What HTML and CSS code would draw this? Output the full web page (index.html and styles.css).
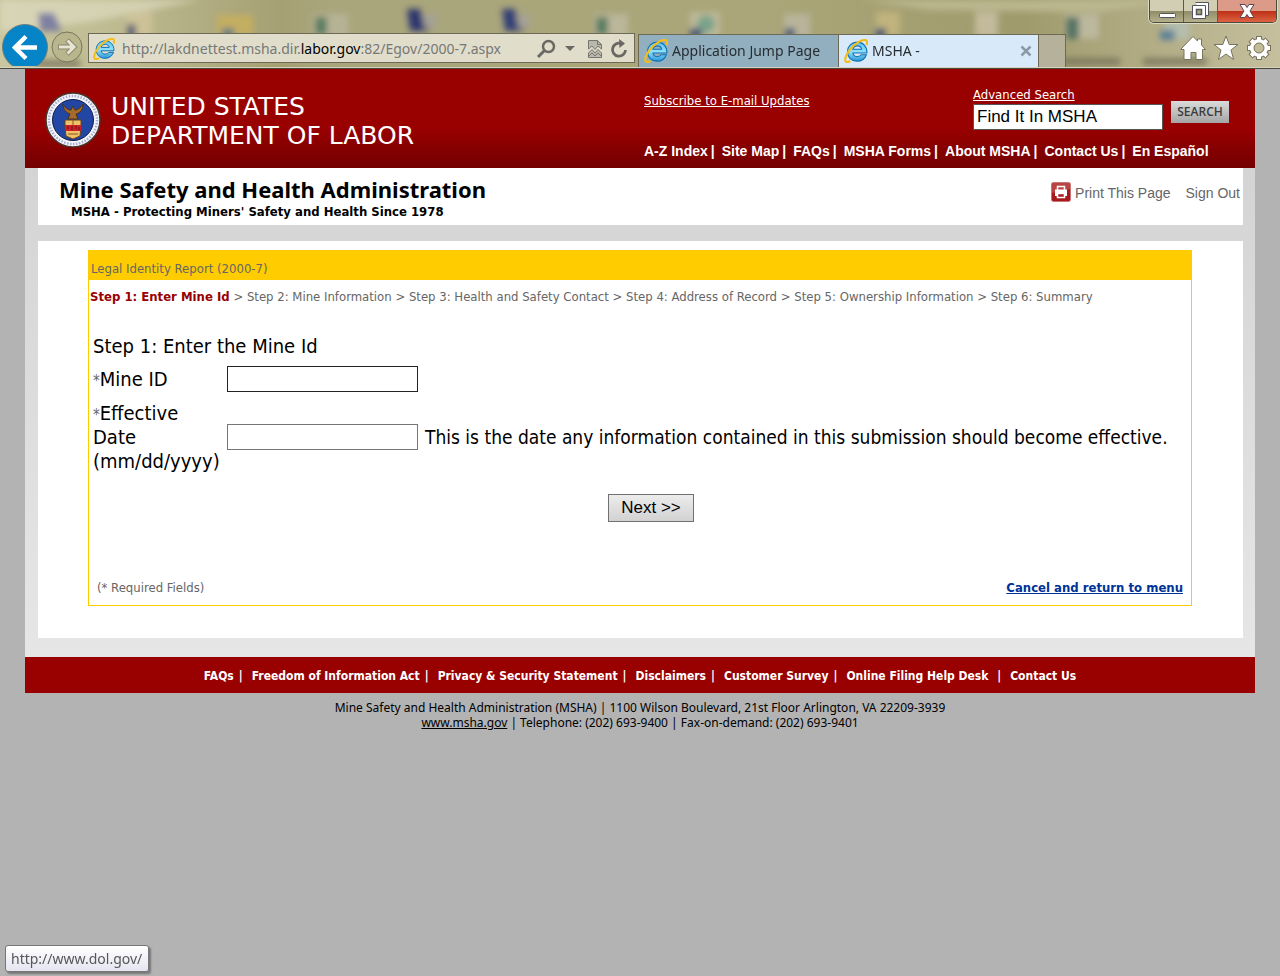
FILE: index.html
```html
<!DOCTYPE html>
<html lang="en">
<head>
<meta charset="utf-8">
<title>MSHA -</title>
<link rel="stylesheet" href="styles.css">
</head>
<body>
<svg class="defs" width="0" height="0" aria-hidden="true">
  <defs>
    <linearGradient id="ieBlue" x1="0" y1="0" x2="0" y2="1">
      <stop offset="0" stop-color="#5cc4ee"/><stop offset=".5" stop-color="#8fe0fa"/><stop offset="1" stop-color="#2a97d6"/>
    </linearGradient>
    <symbol id="ie" viewBox="0 0 22 22">
      <path d="M21 12.800H8.200c.3 2.200 1.800 3.300 4 3.300 1.600 0 2.700-.6 3.500-1.700h4.800c-1.200 3.600-4.200 5.900-8.500 5.900-5.300 0-8.800-3.500-8.800-8.600 0-5.200 3.700-8.800 8.900-8.800 5.500 0 9 3.900 8.900 9.900zM8.200 9.400h8c-.3-2-1.800-3.100-3.900-3.100S8.600 7.400 8.200 9.400z" fill="url(#ieBlue)" stroke="#1272b4" stroke-width="1"/>
      <path d="M20.700 5.600c.7-2.200.5-3.900-.5-4.500C17.500-.3 10.200 3.600 5.200 10 1.600 14.600.1 19.500 1.900 20.800c1 .6 2.400.3 4-.7" fill="none" stroke="#f5bd19" stroke-width="2"/>
    </symbol>
  </defs>
</svg>

<header class="browser">
  <svg class="desktop" viewBox="0 0 1280 68" preserveAspectRatio="none" aria-hidden="true">
    <defs>
      <linearGradient id="glass" x1="0" y1="0" x2="1" y2="0">
        <stop offset="0" stop-color="#c9c6a0"/><stop offset=".1" stop-color="#bdb98f"/><stop offset=".22" stop-color="#a5a074"/><stop offset=".26" stop-color="#aaa67c"/><stop offset=".6" stop-color="#aaa679"/><stop offset=".8" stop-color="#a09b6d"/><stop offset="1" stop-color="#c5bf9e"/>
      </linearGradient>
      <filter id="soft" x="-5%" y="-50%" width="110%" height="200%"><feGaussianBlur stdDeviation="3"/></filter>
    </defs>
    <rect width="1280" height="68" fill="url(#glass)"/>
    <g filter="url(#soft)">
      <path d="M0 0h200L90 22 0 32z" fill="#dedcc0" opacity=".7"/>
      <path d="M860 0h330l-90 12-170-2z" fill="#bbb78f"/>
      <g opacity=".85">
        <path d="M38 13h16l8 18H40z" fill="#6f73a0"/>
        <path d="M126 12h26v24h-26z" fill="#d0c39b"/><path d="M127 24h9v16h-9z" fill="#4c5575"/>
        <path d="M217 15h36v20h-36z" fill="#c8b05c"/><path d="M222 28h12v10h-12z" fill="#557884"/>
        <path d="M312 14h36v24h-36z" fill="#b9b69b"/><path d="M315 17h12v18h-12z" fill="#4b765f"/>
        <path d="M407 9h13l10 22h-20z" fill="#18246e"/><path d="M422 14h15v14h-12z" fill="#a4a29a"/>
        <path d="M502 9h13l10 22h-20z" fill="#222d76"/><path d="M516 14h14v14h-11z" fill="#a4a29a"/>
        <path d="M594 14h34v24h-34z" fill="#bebaa0"/><path d="M596 17h12v18h-12z" fill="#4b765f"/>
        <path d="M690 12h30v26h-30z" fill="#c2bda0"/><circle cx="706" cy="24" r="9" fill="#72a48d"/><path d="M690 28h12v10h-12z" fill="#334c78"/>
        <path d="M784 14h26v24h-26z" fill="#bdb7a1"/><path d="M785 28h10v10h-10z" fill="#334c78"/>
        <path d="M876 12h24v24h-24z" fill="#c6b77f"/><path d="M876 28h10v10h-10z" fill="#334c78"/>
        <path d="M975 12h23v25h-23z" fill="#c8c0a3"/>
        <path d="M1065 14h34v25h-34z" fill="#c0bda4"/><path d="M1066 17h13v22h-13z" fill="#456c62"/>
        <path d="M1165 15h24v24h-24z" fill="#b6c1b4"/><path d="M1160 30h15v10h-15z" fill="#4a789a"/>
        <path d="M1045 58h75v7h-75zM1143 58h64v7h-64zM36 60h44v7H36z" fill="#77745a"/>
      </g>
    </g>
  </svg>

  <div class="window-buttons">
    <button class="win" aria-label="Minimize"><svg width="20" height="20" viewBox="0 0 20 20"><rect x="2.500" y="12.500" width="16" height="4" rx="1" fill="#fff" stroke="#535460"/></svg></button>
    <button class="win" aria-label="Restore"><svg width="20" height="20" viewBox="0 0 20 20"><path d="M4.500 1.500h13v13h-4" fill="#fff" stroke="#535460"/><path d="M1.500 4.500h13v13h-13z" fill="#fff" stroke="#535460"/><path d="M5.500 8.500h5v5h-5z" fill="#aaa67c" stroke="#535460" stroke-width="1.500"/></svg></button>
    <button class="win win-close" aria-label="Close"><svg width="18" height="16" viewBox="0 0 18 16"><path d="M2 1.500h5l2 3 2-3h5l-4 6.500 4 6.500h-5l-2-3-2 3H2L6 8z" fill="#fff" stroke="#5b4650"/></svg></button>
  </div>

  <div class="toolbar">
    <button class="back" aria-label="Back"><svg width="46" height="46" viewBox="0 0 46 46"><circle cx="23" cy="23" r="22.500" fill="#0584c7" stroke="#6b7f7c"/><path d="M35 23.500H13M24 12.500l-11 11 11 11" fill="none" stroke="#fff" stroke-width="4.500"/></svg></button>
    <button class="forward" aria-label="Forward"><svg width="32" height="32" viewBox="0 0 32 32"><circle cx="16" cy="16" r="15" fill="#b9b58d" stroke="#77745c" stroke-width="1"/><path d="M7 16h15M16 9l7 7-7 7" fill="none" stroke="#8a876c" stroke-width="5"/><path d="M8 16h14M16.500 9.500l6.500 6.500-6.500 6.500" fill="none" stroke="#e8e5d4" stroke-width="3"/></svg></button>
    <div class="address">
      <svg width="22" height="22"><use href="#ie"/></svg>
      <span class="url">http://lakdnettest.msha.dir.<span class="host">labor.gov</span>:82/Egov/2000-7.aspx</span>
      <button class="tool" aria-label="Search"><svg width="20" height="20" viewBox="0 0 20 20"><circle cx="12.500" cy="7.500" r="5.500" fill="none" stroke="#696862" stroke-width="2.500"/><path d="M8.500 11.500L2 18" stroke="#696862" stroke-width="3"/></svg></button>
      <button class="tool caret" aria-label="Show address list"><svg width="10" height="6" viewBox="0 0 10 6"><path d="M0 0h10L5 5z" fill="#696862"/></svg></button>
      <button class="tool compat" aria-label="Compatibility view"><svg width="14" height="18" viewBox="0 0 14 18"><path d="M.5 9V.5h9l4 4V9L10 6 7 9.500 4 6z" fill="#b9b8ad" stroke="#77756d"/><path d="M9.500.5v4h4" fill="none" stroke="#77756d"/><path d="M.5 17.500V13L4 9.500 7 13l3-3.500 3.500 3.500v4.500z" fill="#b9b8ad" stroke="#77756d"/><path d="M1 16l3-3 3 3 3-3 3 3" fill="none" stroke="#77756d"/></svg></button>
      <button class="tool" aria-label="Refresh"><svg width="18" height="20" viewBox="0 0 18 20"><path d="M11 4.500A6.500 6.500 0 1 0 15.500 11" fill="none" stroke="#696862" stroke-width="2.800"/><path d="M9 0l6 4.500L9.500 9z" fill="#696862"/></svg></button>
    </div>
    <div class="tabs">
      <a class="tab" href="#"><svg width="24" height="24"><use href="#ie"/></svg>Application Jump Page</a>
      <div class="tab tab-on"><svg width="24" height="24"><use href="#ie"/></svg><span class="tab-name">MSHA -</span><button class="tool" aria-label="Close tab"><svg width="12" height="12" viewBox="0 0 12 12"><path d="M1.500 1.500l9 9M10.500 1.500l-9 9" stroke="#8d9aa5" stroke-width="2.500"/></svg></button></div>
      <button class="new-tab" aria-label="New tab"></button>
    </div>
    <div class="commands">
      <button class="tool" aria-label="Home"><svg width="26" height="26" viewBox="0 0 26 26"><path d="M13 1.500l4.500 4.500V4h4v6l4 4.500h-3V24.500h-6.500v-7h-5v7H4V14.500H.5z" fill="#fff" stroke="#77745c"/></svg></button>
      <button class="tool" aria-label="Favorites"><svg width="26" height="26" viewBox="0 0 26 26"><path d="M13 1l3.200 8.500H25l-7 5.500 2.600 9.500L13 19l-7.600 5.500L8 15 1 9.500h8.800z" fill="#fff" stroke="#77745c"/></svg></button>
      <button class="tool" aria-label="Tools"><svg width="26" height="26" viewBox="0 0 26 26"><g fill="#77745c"><circle cx="13" cy="13" r="10"/><path d="M10 1h6v24h-6zM1 10h24v6H1z"/><path d="M10 1h6v24h-6zM1 10h24v6H1z" transform="rotate(45 13 13)"/></g><g fill="#fff"><circle cx="13" cy="13" r="9"/><path d="M11 2h4v22h-4zM2 11h22v4H2z"/><path d="M11 2h4v22h-4zM2 11h22v4H2z" transform="rotate(45 13 13)"/></g><circle cx="13" cy="13" r="5" fill="#c1bb98" stroke="#77745c"/></svg></button>
    </div>
  </div>
</header>

<div class="page">
  <div class="masthead">
    <div class="brand">
      <svg width="56" height="56" viewBox="0 0 56 56" role="img" aria-label="Department of Labor seal">
        <circle cx="28" cy="28" r="27" fill="#f4f4f8" stroke="#47382f" stroke-width="1.500"/>
        <circle cx="28" cy="28" r="24" fill="none" stroke="#a5add4" stroke-width="2.500" stroke-dasharray="1.500 1.500"/>
        <circle cx="28" cy="28" r="20.500" fill="#2146a4" stroke="#101c4c"/>
        <path d="M18 12c0 6 4 9 7 10l-2 5h10l-2-5c4-1 7-4 7-10-2 4-6 6-8 6l-2-4-2 4c-3 0-6-2-8-6z" fill="#a46b2c" stroke="#4e3217"/>
        <path d="M20 28h16v7l-1 9-7 3-7-3-1-9z" fill="#efc167" stroke="#6b4218"/>
        <path d="M20 33h16v6H20z" fill="#cc2028"/><path d="M23 34v3M27 34v4M31 34v3M34 35v3" stroke="#641417"/>
        <path d="M28 28v5M23 42h10" stroke="#8b5720"/>
      </svg>
      <div class="brand-name">UNITED STATES<br>DEPARTMENT OF LABOR</div>
    </div>
    <div class="mast-right">
      <div class="mast-top">
        <a class="subscribe" href="#">Subscribe to E-mail Updates</a>
        <form class="search">
          <div class="search-field">
            <a href="#">Advanced Search</a>
            <input type="text" value="Find It In MSHA" aria-label="Search MSHA">
          </div>
          <button type="button">SEARCH</button>
        </form>
      </div>
      <nav class="mast-nav">
        <a href="#">A-Z Index</a><a href="#">Site Map</a><a href="#">FAQs</a><a href="#">MSHA Forms</a><a href="#">About MSHA</a><a href="#">Contact Us</a><a href="#">En Español</a>
      </nav>
    </div>
  </div>

  <div class="body">
    <div class="title-bar">
      <div>
        <h1>Mine Safety and Health Administration</h1>
        <p class="tagline">MSHA - Protecting Miners' Safety and Health Since 1978</p>
      </div>
      <div class="page-links">
        <a href="#"><svg width="20" height="20" viewBox="0 0 20 20"><rect x=".5" y=".5" width="19" height="19" rx="2" fill="#a8191d" stroke="#c87577"/><path d="M1 1h18v6L1 11z" fill="#c5605f" opacity=".6"/><path d="M6.500 8V4.500h7V8" fill="none" stroke="#fff" stroke-width="1.500"/><path d="M4 7.500h12v6.500h-2v-3H6v3H4z" fill="#fff"/><path d="M6.500 11.500h7v4h-7z" fill="#a8191d" stroke="#fff" stroke-width="1.500"/></svg>Print This Page</a>
        <a href="#">Sign Out</a>
      </div>
    </div>

    <main>
      <section class="report">
        <h2>Legal Identity Report (2000-7)</h2>
        <p class="steps"><b>Step 1: Enter Mine Id</b> &gt; Step 2: Mine Information &gt; Step 3: Health and Safety Contact &gt; Step 4: Address of Record &gt; Step 5: Ownership Information &gt; Step 6: Summary</p>
        <form class="entry">
          <h3>Step 1: Enter the Mine Id</h3>
          <div class="row">
            <label for="mine"><span class="star">*</span>Mine ID</label>
            <input class="focus" id="mine" type="text">
          </div>
          <div class="row">
            <label for="date"><span class="star">*</span>Effective<br>Date<br>(mm/dd/yyyy)</label>
            <input id="date" type="text">
            <span class="hint">This is the date any information contained in this submission should become effective.</span>
          </div>
          <button class="next" type="button">Next &gt;&gt;</button>
        </form>
        <div class="report-foot"><span>(* Required Fields)</span><a href="#">Cancel and return to menu</a></div>
      </section>
    </main>
  </div>

  <nav class="foot-nav">
    <a href="#">FAQs</a><a href="#">Freedom of Information Act</a><a href="#">Privacy &amp; Security Statement</a><a href="#">Disclaimers</a><a href="#">Customer Survey</a><a href="#">Online Filing Help Desk&nbsp;</a><a href="#">Contact Us</a>
  </nav>
  <footer>
    Mine Safety and Health Administration (MSHA) | 1100 Wilson Boulevard, 21st Floor Arlington, VA 22209-3939<br>
    <a href="#">www.msha.gov</a> | Telephone: (202) 693-9400 | Fax-on-demand: (202) 693-9401
  </footer>
</div>
<div class="status">http://www.dol.gov/</div>
</body>
</html>
```

FILE: styles.css
```css
* { box-sizing: border-box; }
body {
  margin: 0;
  min-height: 100vh;
  background: #b3b3b3;
  color: #000;
  font: 13px/15px "DejaVu Sans Condensed", "DejaVu Sans", sans-serif;
}
h1, h2, h3, p { margin: 0; font-weight: normal; }
svg { display: block; flex: none; }
button { padding: 0; border: 0; background: none; font: inherit; }
input { font: 17px/20px "Liberation Sans", Arial, sans-serif; border-radius: 0; }
.defs { position: absolute; }

/* Browser frame */
.browser {
  position: relative;
  height: 69px;
  overflow: hidden;
  border-bottom: 1px solid #4a4839;
  font: 14px/20px "Noto Sans", sans-serif;
}
.desktop { position: absolute; inset: 0; width: 100%; height: 100%; }
.window-buttons {
  position: absolute;
  top: 0;
  right: 3px;
  display: flex;
  border: 1px solid #4c4a3c;
  border-top: 0;
  border-radius: 0 0 5px 5px;
  overflow: hidden;
  box-shadow: 0 0 0 1px #dedbc5;
}
.win {
  display: grid;
  place-items: center;
  width: 34px;
  height: 22px;
  border-right: 1px solid #5c5a4a;
  background: linear-gradient(#d1ceb4 50%, #8f8b67 50%, #b5b18c);
}
.win-close { width: 58px; border: 0; background: linear-gradient(#dc9a88 50%, #bd2f16 50%, #dc6342); }
.toolbar {
  position: relative;
  display: flex;
  align-items: flex-end;
  height: 68px;
  padding: 0 8px 1px 2px;
  border-bottom: 1px solid #d5d2bd;
}
.back { display: flex; align-items: flex-start; width: 46px; height: 42px; overflow: hidden; }
.forward { margin: 0 5px 3px 3px; }
.address {
  display: flex;
  flex: 0 1 547px;
  align-items: center;
  height: 30px;
  margin: 0 3px 3px 0;
  padding: 2px 6px 0 4px;
  border: 1px solid #6c6957;
  background: #e0decb;
  color: #777;
}
.url { flex: 1; padding-left: 7px; white-space: nowrap; }
.host { color: #000; }
.tool { display: grid; place-items: center; }
.caret { margin: 0 13px 0 9px; }
.compat { margin-right: 8px; }
.tabs { display: flex; height: 33px; margin-bottom: -1px; }
.tab {
  display: flex;
  align-items: center;
  gap: 4px;
  width: 200px;
  padding: 0 6px 0 5px;
  border: solid #6c6957;
  border-width: 1px 0 0 1px;
  background: #92afc0;
  color: #262d31;
  white-space: nowrap;
  text-decoration: none;
}
.tab-on { background: #d8eafa; }
.tab-name { flex: 1; }
.new-tab { width: 28px; border: 1px solid #6c6957; border-bottom: 0; background: #b5b19a; }
.commands { display: flex; gap: 7px; margin: 0 0 5px auto; }

/* Site header */
.page { margin: 0 25px; }
.masthead {
  display: flex;
  justify-content: space-between;
  height: 99px;
  padding: 17px 26px 0 20px;
  background: linear-gradient(#990000 60%, #730000);
  color: #fff;
}
.masthead a { color: #fff; }
.brand { display: flex; align-items: flex-start; gap: 10px; padding-top: 6px; }
.brand-name { font: 25px/29px "DejaVu Sans", sans-serif; white-space: nowrap; }
.mast-right { flex: 0 0 585px; }
.mast-top { display: flex; justify-content: space-between; }
.subscribe { padding-top: 7px; }
.search { display: flex; gap: 8px; }
.search-field { display: grid; gap: 2px; padding-top: 1px; }
.search input { width: 190px; height: 26px; padding: 0 3px; border: 1px solid #555; }
.search button {
  width: 58px;
  height: 22px;
  margin-top: 15px;
  background: linear-gradient(#dadada, #a5a5a5);
  color: #3c3c3c;
  font: 600 12px/22px "Open Sans", sans-serif;
}
.mast-nav { display: flex; padding-top: 13px; font: bold 14px/16px "Liberation Sans", Arial, sans-serif; white-space: nowrap; }
.mast-nav a, .foot-nav a { color: #fff; text-decoration: none; }
.mast-nav a:not(:last-child)::after { content: "|"; padding: 0 7px 0 3px; }

/* Content */
.body { padding: 0 12px 19px 13px; background: linear-gradient(#d4d4d4, #e6e6e6); }
.title-bar { display: flex; justify-content: space-between; height: 57px; padding: 9px 3px 0 21px; margin-bottom: 16px; background: #fff; }
h1 { margin-bottom: 2px; font: bold 22px/24px "Noto Sans", sans-serif; }
.tagline { padding-left: 12px; font-weight: bold; line-height: 17px; }
.page-links { display: flex; gap: 15px; padding-top: 5px; font: 14px/22px "Liberation Sans", Arial, sans-serif; }
.page-links a { display: flex; gap: 4px; height: 20px; color: #666; text-decoration: none; }
main { padding: 9px 51px 32px 50px; background: #fff; }
.report { border: 1px solid #fc0; border-top: 0; color: #666; line-height: 16px; }
.report h2 { padding: 11px 2px 3px; background: #fc0; font-size: 13px; line-height: 16px; }
.steps { padding: 9px 1px 0; white-space: nowrap; }
.steps b { color: #900; }
.entry { display: grid; padding: 29px 4px 0; color: #000; font-size: 20px; line-height: 24px; }
.entry h3 { font-size: 20px; line-height: 24px; margin-bottom: 8px; }
.row { display: grid; grid-template-columns: 127px 191px 1fr; column-gap: 7px; align-items: center; margin-bottom: 9px; }
.row input { width: 191px; height: 26px; border: 1px solid #767676; }
.row input.focus { border-color: #222; outline: 0; }
.star { color: #666; font-size: 15px; line-height: 1; }
.hint { font-size: 19px; white-space: nowrap; }
.next {
  justify-self: center;
  width: 86px;
  height: 28px;
  margin: 12px 0 0 22px;
  border: 1px solid #707070;
  background: linear-gradient(#ececec, #d2d2d2);
  font: 17px/24px "Liberation Sans", Arial, sans-serif;
}
.report-foot { display: flex; justify-content: space-between; padding: 58px 8px 9px; }
.report-foot a { color: #039; font-weight: bold; }

/* Footer */
.foot-nav { display: flex; justify-content: center; padding: 11px 0 9px; background: #900; font-size: 12px; font-weight: bold; line-height: 16px; }
.foot-nav a:not(:last-child)::after { content: "|"; padding: 0 9px 0 5px; }
footer { padding-top: 7px; text-align: center; font: 12px/15px "Noto Sans", sans-serif; }
footer a { color: #000; }

.status {
  position: fixed;
  left: 5px;
  bottom: 4px;
  padding: 2px 6px 1px 5px;
  border: 1px solid #767676;
  border-radius: 3px;
  background: linear-gradient(#fff, #e4e5f0);
  box-shadow: 2px 2px 2px #777;
  color: #575757;
  font: 14px/22px "Noto Sans", sans-serif;
}
```
